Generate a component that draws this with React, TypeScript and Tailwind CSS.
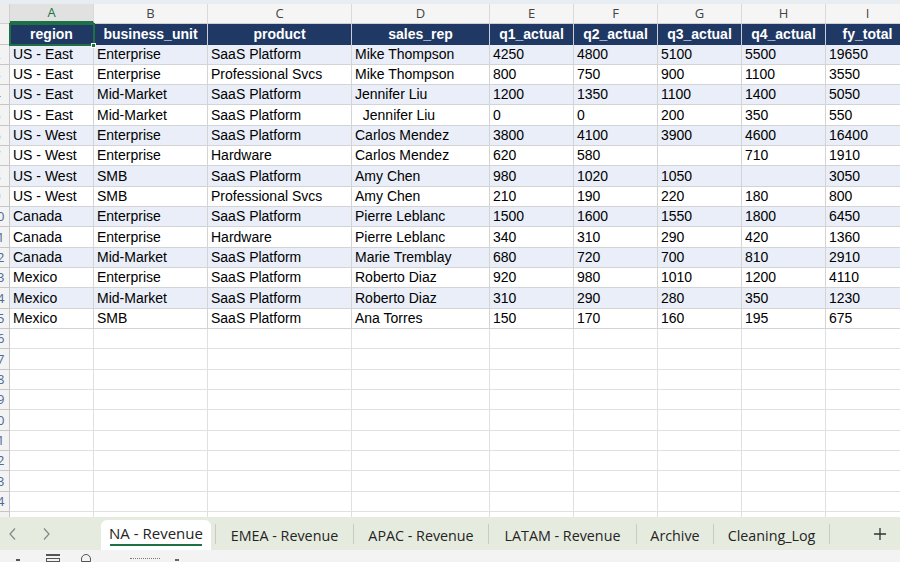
import React from 'react';

const cols = [
  { key: 'A', label: 'region', w: 'w-[84px]' },
  { key: 'B', label: 'business_unit', w: 'w-[114px]' },
  { key: 'C', label: 'product', w: 'w-[144px]' },
  { key: 'D', label: 'sales_rep', w: 'w-[138px]' },
  { key: 'E', label: 'q1_actual', w: 'w-[84px]' },
  { key: 'F', label: 'q2_actual', w: 'w-[84px]' },
  { key: 'G', label: 'q3_actual', w: 'w-[84px]' },
  { key: 'H', label: 'q4_actual', w: 'w-[84px]' },
  { key: 'I', label: 'fy_total', w: 'w-[84px]' },
];

const rows: string[][] = [
  ['US - East', 'Enterprise', 'SaaS Platform', 'Mike Thompson', '4250', '4800', '5100', '5500', '19650'],
  ['US - East', 'Enterprise', 'Professional Svcs', 'Mike Thompson', '800', '750', '900', '1100', '3550'],
  ['US - East', 'Mid-Market', 'SaaS Platform', 'Jennifer Liu', '1200', '1350', '1100', '1400', '5050'],
  ['US - East', 'Mid-Market', 'SaaS Platform', '  Jennifer Liu', '0', '0', '200', '350', '550'],
  ['US - West', 'Enterprise', 'SaaS Platform', 'Carlos Mendez', '3800', '4100', '3900', '4600', '16400'],
  ['US - West', 'Enterprise', 'Hardware', 'Carlos Mendez', '620', '580', '', '710', '1910'],
  ['US - West', 'SMB', 'SaaS Platform', 'Amy Chen', '980', '1020', '1050', '', '3050'],
  ['US - West', 'SMB', 'Professional Svcs', 'Amy Chen', '210', '190', '220', '180', '800'],
  ['Canada', 'Enterprise', 'SaaS Platform', 'Pierre Leblanc', '1500', '1600', '1550', '1800', '6450'],
  ['Canada', 'Enterprise', 'Hardware', 'Pierre Leblanc', '340', '310', '290', '420', '1360'],
  ['Canada', 'Mid-Market', 'SaaS Platform', 'Marie Tremblay', '680', '720', '700', '810', '2910'],
  ['Mexico', 'Enterprise', 'SaaS Platform', 'Roberto Diaz', '920', '980', '1010', '1200', '4110'],
  ['Mexico', 'Mid-Market', 'SaaS Platform', 'Roberto Diaz', '310', '290', '280', '350', '1230'],
  ['Mexico', 'SMB', 'SaaS Platform', 'Ana Torres', '150', '170', '160', '195', '675'],
];

const tabs = [
  { name: 'EMEA - Revenue', w: 'w-[137px]' },
  { name: 'APAC - Revenue', w: 'w-[134px]' },
  { name: 'LATAM - Revenue', w: 'w-[147px]' },
  { name: 'Archive', w: 'w-[76px]' },
  { name: 'Cleaning_Log', w: 'w-[115px]' },
];

// row header is scrolled mostly out of view; only the tail of two-digit numbers shows
const RowNum: React.FC<{ n: number }> = ({ n }) => (
  <div className="w-[10px] shrink-0 h-full bg-[#f3f3f3] border-r border-b border-[#c6c6c6] overflow-hidden flex items-center">
    <div className="w-[26px] ml-[-16px] shrink-0 flex justify-center text-[13px] text-[#4f6a94] leading-none font-['Open_Sans',sans-serif]">
      {n}
    </div>
  </div>
);

export default function App() {
  return (
    <div className="w-[900px] h-[562px] overflow-hidden flex flex-col bg-white font-['Liberation_Sans',Arial,sans-serif]">
      <div className="h-[4px] bg-[#e8edf2] shrink-0" />
      <div className="flex-1 overflow-hidden">
        {/* column letters */}
        <div className="flex h-[20px] bg-[#f5f5f5] border-b border-[#d0d0d0] font-['Open_Sans',sans-serif]">
          <div className="w-[10px] shrink-0 border-r border-[#d0d0d0] bg-[#ececec]" />
          {cols.map((c) => (
            <div
              key={c.key}
              className={`${c.w} shrink-0 flex items-center justify-center text-[13px] border-r border-[#dadada] ${
                c.key === 'A' ? 'bg-[#e1e1e1] text-[#1e7145] border-b-2 border-b-[#1e7145]' : 'text-[#444]'
              }`}
            >
              {c.key}
            </div>
          ))}
        </div>
        {/* header row */}
        <div className="flex h-[20.5px]">
          <RowNum n={1} />
          {cols.map((c, i) => (
            <div
              key={c.key}
              className={`${c.w} shrink-0 bg-[#203864] text-white font-bold text-[14px] flex items-center justify-center border-r border-[#c9ced8] ${
                i === 0 ? 'outline-2 outline-[#1e7145] -outline-offset-1 relative' : ''
              }`}
            >
              {c.label}
              {i === 0 && <span className="absolute right-[-3px] bottom-[-3px] w-[5px] h-[5px] bg-[#1e7145] border border-white" />}
            </div>
          ))}
        </div>
        {rows.map((r, ri) => (
          <div key={ri} className="flex h-[20.33px]">
            <RowNum n={ri + 2} />
            {r.map((v, ci) => (
              <div
                key={ci}
                className={`${cols[ci].w} shrink-0 border-r border-b border-[#d4d4d4] text-[14px] text-black flex items-center pl-[3px] whitespace-pre overflow-hidden ${
                  ri % 2 === 0 ? 'bg-[#e9eef8]' : 'bg-white'
                }`}
              >
                {v}
              </div>
            ))}
          </div>
        ))}
        {Array.from({ length: 10 }).map((_, i) => (
          <div key={i} className="flex h-[20.33px]">
            <RowNum n={i + 16} />
            {cols.map((c) => (
              <div key={c.key} className={`${c.w} shrink-0 border-r border-b border-[#e0e0e0]`} />
            ))}
          </div>
        ))}
      </div>
      {/* sheet tabs */}
      <div className="h-[33px] shrink-0 bg-[#e6ebdf] flex items-stretch font-['Open_Sans',sans-serif] text-[14.3px] text-[#242424]">
        <div className="w-[101px] flex items-center text-[#8a8a8a]">
          <svg width="10" height="14" viewBox="0 0 10 14" className="ml-[8px]">
            <path d="M7 1.5 L2 7 L7 12.5" fill="none" stroke="currentColor" strokeWidth="1.3" />
          </svg>
          <svg width="10" height="14" viewBox="0 0 10 14" className="ml-[23px]">
            <path d="M3 1.5 L8 7 L3 12.5" fill="none" stroke="currentColor" strokeWidth="1.3" />
          </svg>
        </div>
        <div className="w-[110px] mt-[3px] bg-white rounded-t-[6px] flex flex-col items-center pt-[2px] text-[15px]">
          <span className="leading-[22px]">NA - Revenue</span>
          <span className="w-[92px] h-[2px] bg-[#1e7145]" />
        </div>
        <div className="w-[4px]" />
        <div className="flex items-center">
          {tabs.map((t) => (
            <div key={t.name} className="flex items-center">
              <span className="w-px h-[20px] bg-[#c8ccc3]" />
              <span className={`${t.w} text-center pt-[4px]`}>{t.name}</span>
            </div>
          ))}
          <span className="w-px h-[20px] bg-[#c8ccc3]" />
        </div>
        <div className="flex-1 flex items-center justify-end pr-[13px]">
          <svg width="14" height="14" viewBox="0 0 14 14">
            <path d="M7 1 V13 M1 7 H13" stroke="#333" strokeWidth="1.3" />
          </svg>
        </div>
      </div>
      {/* status bar */}
      <div className="h-[12px] shrink-0 bg-[#f3f3f3] relative overflow-hidden">
        <span className="absolute left-[16px] top-[9px] w-[4px] h-[2px] bg-[#555]" />
        <span className="absolute left-[46px] top-[4px] w-[14px] h-[2px] bg-[#555]" />
        <span className="absolute left-[46px] top-[8px] w-[14px] h-[4px] border border-[#555]" />
        <span className="absolute left-[81px] top-[4px] w-[10px] h-[8px] rounded-t-full border border-[#555]" />
        <span className="absolute left-[130px] top-[8px] w-[30px] h-[3px] border-t border-dotted border-[#777]" />
        <span className="absolute left-[175px] top-[9px] w-[4px] h-[2px] bg-[#666]" />
      </div>
    </div>
  );
}
